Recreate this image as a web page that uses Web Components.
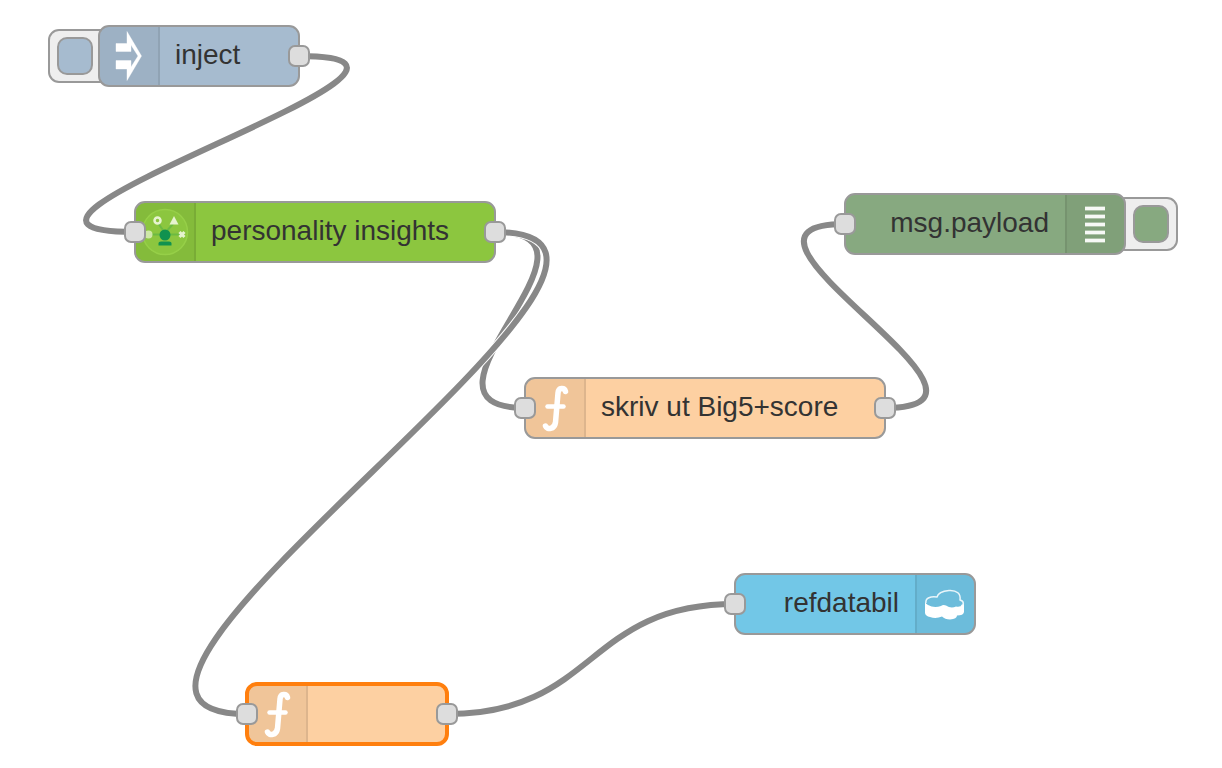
<!DOCTYPE html>
<html lang="sv">
<head>
<meta charset="utf-8">
<title>Flow editor</title>
<style>
  body { margin: 0; background: #fff; }
</style>
</head>
<body>
<flow-canvas>
  <flow-wire slot="wires" x1="495" y1="232" x2="525" y2="408"></flow-wire>
  <flow-wire slot="wires" x1="299" y1="56" x2="134" y2="232"></flow-wire>
  <flow-wire slot="wires" x1="495" y1="232" x2="247" y2="714"></flow-wire>
  <flow-wire slot="wires" x1="885" y1="408" x2="845" y2="224"></flow-wire>
  <flow-wire slot="wires" x1="447" y1="714" x2="735" y2="604"></flow-wire>

  <flow-node x="98" y="25" w="202" color="#a6bbcf" outputs button="left">
    <flow-icon slot="icon" name="inject"></flow-icon>inject
  </flow-node>
  <flow-node x="134" y="201" w="362" color="#8cc63f" inputs outputs>
    <flow-icon slot="icon" name="insights"></flow-icon>personality insights
  </flow-node>
  <flow-node x="844" y="193" w="282" color="#87a980" inputs align="right" button="right">
    <flow-icon slot="icon" name="debug"></flow-icon>msg.payload
  </flow-node>
  <flow-node x="524" y="377" w="362" color="#fdd0a2" inputs outputs>
    <flow-icon slot="icon" name="function"></flow-icon>skriv ut Big5+score
  </flow-node>
  <flow-node x="734" y="573" w="242" color="#72c7e7" inputs align="right">
    <flow-icon slot="icon" name="cloud"></flow-icon>refdatabil
  </flow-node>
  <flow-node x="246" y="683" w="202" color="#fdd0a2" inputs outputs selected>
    <flow-icon slot="icon" name="function"></flow-icon>
  </flow-node>
</flow-canvas>

<script>
const NODE_WIDTH = 200, CURVE = 0.75;

class FlowCanvas extends HTMLElement {
  constructor() {
    super();
    this.attachShadow({ mode: 'open' }).innerHTML = `
      <style>
        :host { display: block; position: relative; min-height: 100vh; overflow: hidden; background: #fff;
          font: 28px/32px "Liberation Sans", Arial, sans-serif; color: #333; }
      </style>
      <slot name="wires"></slot><slot></slot>`;
  }
}

/* A wire leaves its output to the right and enters its input from the left. */
class FlowWire extends HTMLElement {
  connectedCallback() {
    const [x1, y1, x2, y2] = ['x1', 'y1', 'x2', 'y2'].map(n => Number(this.getAttribute(n)));
    const dx = x2 - x1, delta = Math.hypot(dx, y2 - y1);
    let scale = CURVE;
    if (delta < NODE_WIDTH) scale = CURVE - CURVE * (NODE_WIDTH - delta) / NODE_WIDTH;
    if (dx < 0) scale += 2 * Math.min(5 * NODE_WIDTH, -dx) / (5 * NODE_WIDTH);
    const c = Math.round(scale * NODE_WIDTH);
    const d = `M${x1} ${y1}C${x1 + c} ${y1} ${x2 - c} ${y2} ${x2} ${y2}`;
    this.attachShadow({ mode: 'open' }).innerHTML = `
      <style>
        :host { display: block; position: absolute; inset: 0; pointer-events: none; }
        svg { display: block; width: 100%; height: 100%; overflow: visible; }
        path { fill: none; }
      </style>
      <svg aria-hidden="true"><path d="${d}" stroke="#fff" stroke-width="8"/><path d="${d}" stroke="#888" stroke-width="6"/></svg>`;
  }
}

const ICONS = {
  inject: `<path fill="#fff" stroke="#fff" stroke-opacity=".4" d="M17 17.500H28V5.500L42.500 30 28 54.500V43H17V34.500H32V41L39 30 32 19V25.500H17Z"/>`,
  insights: `<circle cx="30" cy="30" r="22.500" fill="#8cc63f" stroke="#96cf48" stroke-width="1.500"/>
    <path d="M23 21L30 31 38 22M15 32.500H45" stroke="#6cba42" stroke-width="2" fill="none"/>
    <circle cx="22.500" cy="18.500" r="3" fill="none" stroke="#e6f3cf" stroke-width="2.500"/>
    <path d="M39 14L43.500 22.500H34.500Z" fill="#e6f3cf"/>
    <circle cx="13.500" cy="32.500" r="4" fill="#cfe8a8"/>
    <path d="M44.500 30L49.500 35M49.500 30L44.500 35" stroke="#e6f3cf" stroke-width="3"/>
    <circle cx="30" cy="33" r="5.500" fill="#11924f"/>
    <path d="M23.500 43.500V41Q23.500 39.500 26 39.500H34Q36.500 39.500 36.500 41V43.500Z" fill="#11924f"/>`,
  debug: `<path d="M20 14.500H40M20 22.500H40M20 30.500H40M20 38.500H40M20 46.500H40" stroke="#fff" stroke-opacity=".35" stroke-width="5"/>
    <path d="M20 14.500H40M20 22.500H40M20 30.500H40M20 38.500H40M20 46.500H40" stroke="#fff" stroke-opacity=".9" stroke-width="3"/>`,
  function: `<path d="M40.500 13.500C39.500 9.500 33.500 9 33 15L30.500 44.500C29.500 51.500 22 52 20.500 48" fill="none" stroke="#fff" stroke-width="5.500" stroke-linecap="round"/>
    <path d="M22.500 28.500H38.500" stroke="#fff" stroke-width="4.500" stroke-linecap="round"/>`,
  cloud: `<path fill="#fff" d="M10 28V39Q10.500 42 15 43Q21 45 27 42.500Q30 45.500 35 45.500Q42 45 42 41.500Q48.500 41.500 49 38V30Q46 33.500 41 32.500Q36 35 31 31.500Q28 30.500 26 32Q19 34.500 13 31Q11 30 10 28Z"/>
    <path fill="none" stroke="#fff" stroke-opacity=".85" stroke-width="1.500" stroke-linejoin="round" d="M11 29C10 24 16 22 22 23C23 19 28 17 34 16.500C42 16 46 20 45 26C49 27 49.500 31 46 32"/>`
};

class FlowIcon extends HTMLElement {
  connectedCallback() {
    this.attachShadow({ mode: 'open' }).innerHTML = `
      <style>:host, svg { display: block; width: 60px; height: 60px; }</style>
      <svg viewBox="0 0 60 60" aria-hidden="true">${ICONS[this.getAttribute('name')]}</svg>`;
  }
}

class FlowNode extends HTMLElement {
  connectedCallback() {
    const a = n => this.getAttribute(n), has = n => this.hasAttribute(n);
    this.style.left = a('x') + 'px';
    this.style.top = a('y') + 'px';
    this.style.width = a('w') + 'px';
    this.style.setProperty('--node', a('color'));
    this.attachShadow({ mode: 'open' }).innerHTML = `
      <style>
        :host { display: block; position: absolute; box-sizing: border-box; }
        * { box-sizing: border-box; }
        .body { position: relative; display: flex; height: 62px; border: 2px solid #999;
          border-radius: 11px; background: var(--node); overflow: hidden; }
        .icon { flex: none; width: 61px; margin: -1px 0 -1px -1px; background: rgba(0,0,0,.05);
          border-right: 2px solid rgba(0,0,0,.08); }
        .label { flex: 1; padding: 12px 16px 12px 15px; white-space: nowrap; }
        :host([align=right]) .body { flex-direction: row-reverse; }
        :host([align=right]) .icon { width: 60px; margin: -1px -1px -1px 0; border-right: 0; border-left: 2px solid rgba(0,0,0,.08); }
        :host([align=right]) ::slotted(flow-icon) { margin-left: -2px; }
        :host([align=right]) .label { text-align: right; }
        :host([selected]) .body { height: 64px; margin: -1px; border: 4px solid #ff7f0e; border-radius: 12px; }
        :host([selected]) .icon { margin: -2px 0 -2px -2px; }
        .port { position: absolute; top: 20px; width: 22px; height: 22px; border: 2px solid #999;
          border-radius: 7px; background: #ddd; }
        .in { left: -10px; } .out { right: -10px; }
        button { position: absolute; top: 4px; width: 64px; height: 54px; padding: 6px 7px; margin: 0;
          border: 2px solid #999; border-radius: 11px; background: #eee; }
        button span { display: block; width: 36px; height: 38px; border: 2px solid #999;
          border-radius: 10px; background: var(--node); }
        .left { left: -50px; } .right { right: -52px; }
        .right span { margin-left: auto; }
      </style>
      ${has('button') ? `<button type="button" class="${a('button')}" aria-label="Toggle"><span></span></button>` : ''}
      <div class="body"><div class="icon"><slot name="icon"></slot></div><div class="label"><slot></slot></div></div>
      ${has('inputs') ? '<div class="port in"></div>' : ''}
      ${has('outputs') ? '<div class="port out"></div>' : ''}`;
  }
}

customElements.define('flow-canvas', FlowCanvas);
customElements.define('flow-wire', FlowWire);
customElements.define('flow-icon', FlowIcon);
customElements.define('flow-node', FlowNode);
</script>
</body>
</html>
